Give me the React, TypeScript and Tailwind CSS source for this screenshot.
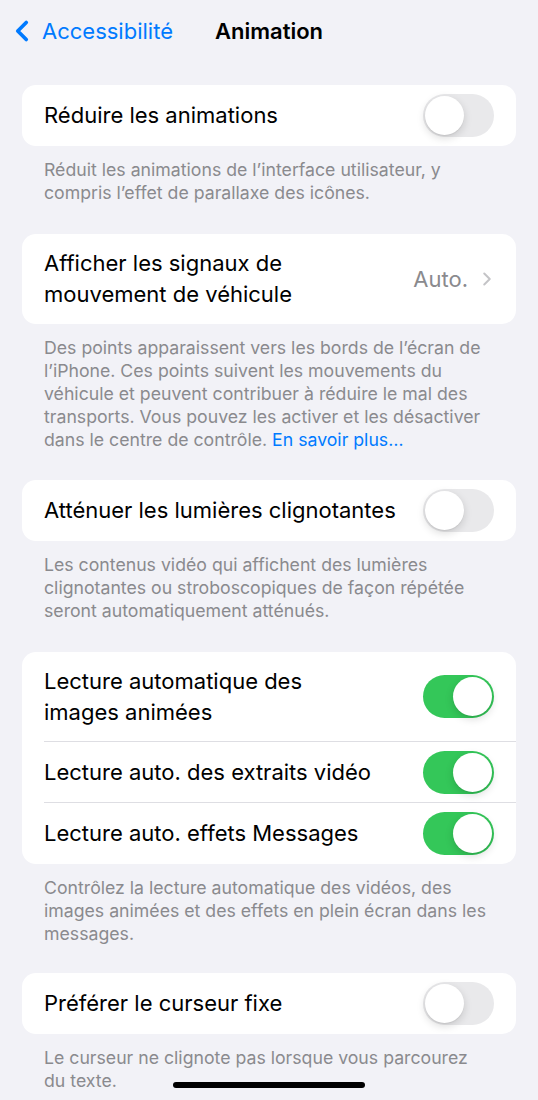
import { ChevronLeft, ChevronRight } from "lucide-react";

type Row = {
  label: string[];
  on?: boolean;
  value?: string;
};

function Toggle({ on }: { on: boolean }) {
  return (
    <div
      className={
        on
          ? "relative h-[43px] w-[71px] shrink-0 rounded-full bg-[#34c759]"
          : "relative h-[43px] w-[71px] shrink-0 rounded-full bg-[#e9e9eb]"
      }
    >
      <div
        className={
          on
            ? "absolute right-[2px] top-[2px] h-[39px] w-[39px] rounded-full bg-white shadow-[0_3px_8px_rgba(0,0,0,0.15),0_1px_1px_rgba(0,0,0,0.06)]"
            : "absolute left-[2px] top-[2px] h-[39px] w-[39px] rounded-full bg-white shadow-[0_3px_8px_rgba(0,0,0,0.15),0_1px_1px_rgba(0,0,0,0.06)]"
        }
      />
    </div>
  );
}

function Card({ rows }: { rows: Row[] }) {
  return (
    <div className="mx-[22px] overflow-hidden rounded-[14px] bg-white">
      {rows.map((row, i) => (
        <div key={i} className="pl-[22px]">
          <div
            className={
              (row.label.length > 1 ? "h-[90px] " : "h-[61px] ") +
              (i < rows.length - 1 ? "border-b border-[#dedee3] " : "") +
              "flex items-center justify-between pr-[22px]"
            }
          >
            <div className="text-[22px] leading-[31px] text-black">
              {row.label.map((l) => (
                <div key={l}>{l}</div>
              ))}
            </div>
            {row.value ? (
              <div className="flex items-center gap-[8px] text-[22px] text-[#8a8a8e]">
                <span>{row.value}</span>
                <ChevronRight size={22} strokeWidth={2.2} className="mr-[-4px] text-[#c4c4c7]" />
              </div>
            ) : (
              <Toggle on={!!row.on} />
            )}
          </div>
        </div>
      ))}
    </div>
  );
}

function Footer({ lines, link }: { lines: string[]; link?: string }) {
  return (
    <div className="mx-[22px] px-[22px] pt-[12px] text-[17.7px] leading-[23px] text-[#8a8a8e]">
      {lines.map((l, i) => (
        <div key={i}>
          {l}
          {link && i === lines.length - 1 ? (
            <span className="text-[#007aff]"> {link}</span>
          ) : null}
        </div>
      ))}
    </div>
  );
}

export default function App() {
  return (
    <div
      className="relative min-h-[1100px] w-[538px] overflow-hidden bg-[#f2f2f7]"
      style={{ fontFamily: "Inter, 'Noto Sans', sans-serif" }}
    >
      <div className="relative flex h-[62px] items-center">
        <div className="flex items-center pl-[5px] text-[#007aff]">
          <ChevronLeft size={34} strokeWidth={2.6} />
          <span className="ml-[3px] text-[22px]">Accessibilité</span>
        </div>
        <div className="absolute left-0 right-0 text-center text-[22px] font-semibold text-black">
          Animation
        </div>
      </div>

      <div className="mt-[23px]">
        <Card rows={[{ label: ["Réduire les animations"] }]} />
        <Footer
          lines={[
            "Réduit les animations de l’interface utilisateur, y",
            "compris l’effet de parallaxe des icônes.",
          ]}
        />
      </div>

      <div className="mt-[30px]">
        <Card
          rows={[
            {
              label: ["Afficher les signaux de", "mouvement de véhicule"],
              value: "Auto.",
            },
          ]}
        />
        <Footer
          lines={[
            "Des points apparaissent vers les bords de l’écran de",
            "l’iPhone. Ces points suivent les mouvements du",
            "véhicule et peuvent contribuer à réduire le mal des",
            "transports. Vous pouvez les activer et les désactiver",
            "dans le centre de contrôle.",
          ]}
          link="En savoir plus…"
        />
      </div>

      <div className="mt-[29px]">
        <Card rows={[{ label: ["Atténuer les lumières clignotantes"] }]} />
        <Footer
          lines={[
            "Les contenus vidéo qui affichent des lumières",
            "clignotantes ou stroboscopiques de façon répétée",
            "seront automatiquement atténués.",
          ]}
        />
      </div>

      <div className="mt-[30px]">
        <Card
          rows={[
            { label: ["Lecture automatique des", "images animées"], on: true },
            { label: ["Lecture auto. des extraits vidéo"], on: true },
            { label: ["Lecture auto. effets Messages"], on: true },
          ]}
        />
        <Footer
          lines={[
            "Contrôlez la lecture automatique des vidéos, des",
            "images animées et des effets en plein écran dans les",
            "messages.",
          ]}
        />
      </div>

      <div className="mt-[28px]">
        <Card rows={[{ label: ["Préférer le curseur fixe"] }]} />
        <Footer
          lines={[
            "Le curseur ne clignote pas lorsque vous parcourez",
            "du texte.",
          ]}
        />
      </div>

      <div className="absolute left-[173px] top-[1082px] h-[6px] w-[192px] rounded-full bg-black" />
    </div>
  );
}
